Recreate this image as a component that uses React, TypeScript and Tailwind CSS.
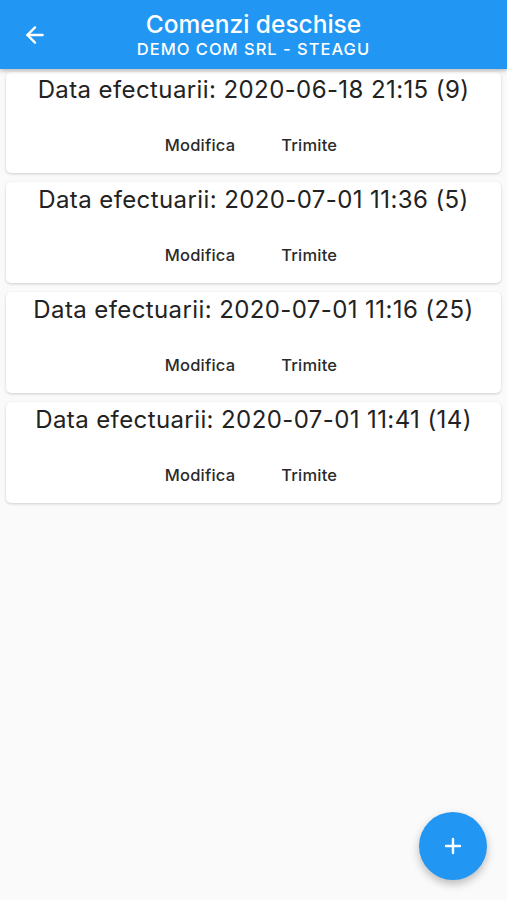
import { ArrowLeft, Plus } from "lucide-react";

const orders = [
  { date: "2020-06-18 21:15", count: 9 },
  { date: "2020-07-01 11:36", count: 5 },
  { date: "2020-07-01 11:16", count: 25 },
  { date: "2020-07-01 11:41", count: 14 },
];

function OrderCard({ date, count }: { date: string; count: number }) {
  return (
    <div className="mx-[6px] h-[101px] rounded-[5px] bg-white shadow-[0_1px_3px_rgba(0,0,0,0.18)] flex flex-col items-center">
      <div className="text-[24px] leading-[34px] tracking-[0.4px] text-[#222] mt-[1px]">
        Data efectuarii: {date} ({count})
      </div>
      <div className="flex gap-[30px] mt-[20px] pr-[5px] text-[16.5px] font-medium tracking-[0.2px] text-[#2a2a2a] leading-[20px]">
        <button className="px-[8px] py-[8px]">Modifica</button>
        <button className="px-[8px] py-[8px]">Trimite</button>
      </div>
    </div>
  );
}

export default function App() {
  return (
    <div
      className="relative w-[507px] h-[900px] bg-[#fafafa] overflow-hidden"
      style={{ fontFamily: "Inter, 'Noto Sans', sans-serif" }}
    >
      <header className="h-[69px] bg-[#2196f3] shadow-[0_2px_4px_rgba(0,0,0,0.25)] flex items-center relative z-10">
        <button className="w-[70px] h-[69px] flex items-center justify-center text-white">
          <ArrowLeft size={26} strokeWidth={2.2} />
        </button>
        <div className="flex-1 flex flex-col items-center pr-[70px] text-white">
          <div className="text-[24.5px] font-medium leading-[30px] mt-[-1px]">Comenzi deschise</div>
          <div className="text-[16.5px] font-medium leading-[20px] tracking-[1px]">DEMO COM SRL - STEAGU</div>
        </div>
      </header>
      <main className="flex flex-col gap-[9px] pt-[3px]">
        {orders.map((o) => (
          <OrderCard key={o.date} date={o.date} count={o.count} />
        ))}
      </main>
      <button className="absolute left-[419px] top-[812px] w-[68px] h-[68px] rounded-full bg-[#2196f3] text-white flex items-center justify-center shadow-[0_4px_8px_rgba(0,0,0,0.25)]">
        <Plus size={24} strokeWidth={2.4} />
      </button>
    </div>
  );
}
